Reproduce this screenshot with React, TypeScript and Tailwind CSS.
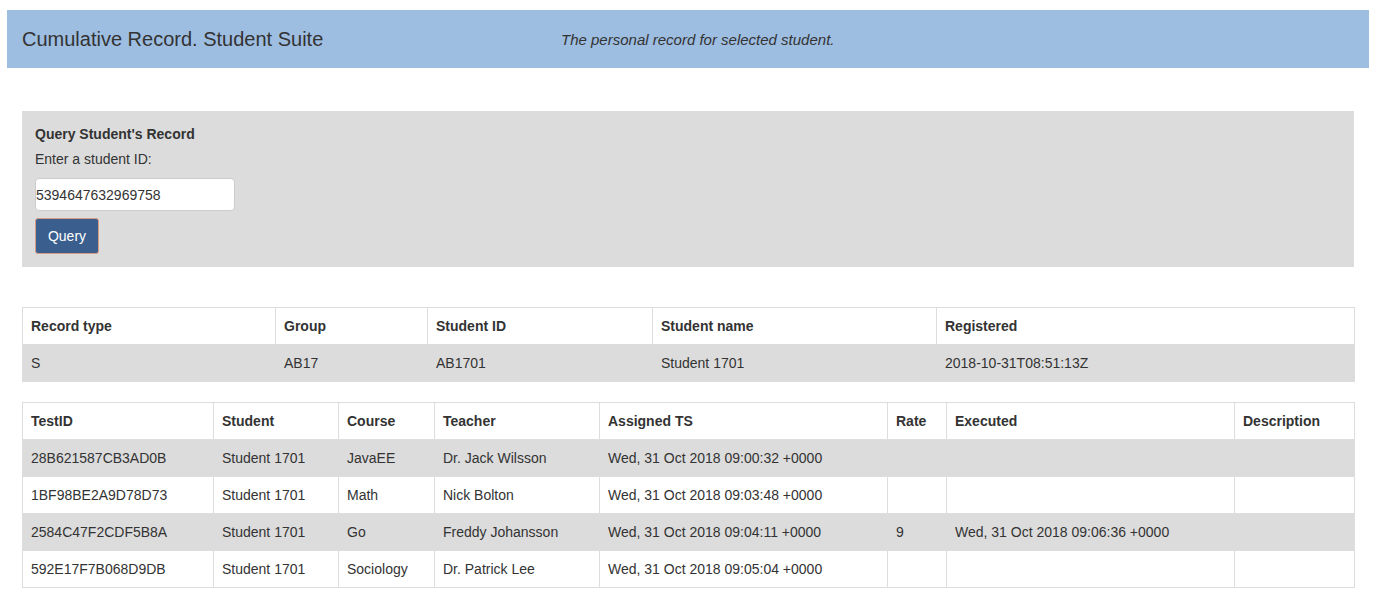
import React from "react";

const t1Cols = [253, 152, 225, 284, 418];
const t1Head = ["Record type", "Group", "Student ID", "Student name", "Registered"];
const t1Rows = [["S", "AB17", "AB1701", "Student 1701", "2018-10-31T08:51:13Z"]];

const t2Cols = [191, 125, 96, 165, 288, 59, 288, 120];
const t2Head = ["TestID", "Student", "Course", "Teacher", "Assigned TS", "Rate", "Executed", "Description"];
const t2Rows = [
  ["28B621587CB3AD0B", "Student 1701", "JavaEE", "Dr. Jack Wilsson", "Wed, 31 Oct 2018 09:00:32 +0000", "", "", ""],
  ["1BF98BE2A9D78D73", "Student 1701", "Math", "Nick Bolton", "Wed, 31 Oct 2018 09:03:48 +0000", "", "", ""],
  ["2584C47F2CDF5B8A", "Student 1701", "Go", "Freddy Johansson", "Wed, 31 Oct 2018 09:04:11 +0000", "9", "Wed, 31 Oct 2018 09:06:36 +0000", ""],
  ["592E17F7B068D9DB", "Student 1701", "Sociology", "Dr. Patrick Lee", "Wed, 31 Oct 2018 09:05:04 +0000", "", "", ""],
];

function DataTable({ cols, head, rows, className }: { cols: number[]; head: string[]; rows: string[][]; className?: string }) {
  return (
    <table className={"w-[1331px] table-fixed border-collapse border border-[#dddddd] " + (className ?? "")}>
      <colgroup>
        {cols.map((w, i) => (
          <col key={i} style={{ width: w }} />
        ))}
      </colgroup>
      <thead>
        <tr>
          {head.map((h, i) => (
            <th key={i} className="border border-[#dddddd] px-2 py-2 text-left align-bottom font-bold leading-5 whitespace-nowrap">
              {h}
            </th>
          ))}
        </tr>
      </thead>
      <tbody>
        {rows.map((r, ri) => (
          <tr key={ri} className={ri % 2 === 0 ? "bg-[#dcdcdc]" : "bg-white"}>
            {r.map((c, ci) => (
              <td key={ci} className="border border-[#dddddd] px-2 py-2 leading-5 h-[37px] whitespace-nowrap">
                {c}
              </td>
            ))}
          </tr>
        ))}
      </tbody>
    </table>
  );
}

export default function App() {
  return (
    <div className="min-h-[609px] bg-white text-[14px] leading-5 text-[#333333]" style={{ fontFamily: '"Liberation Sans", Arial, sans-serif' }}>
      <div className="pt-[10px] px-[7px]">
        <div className="flex h-[58px] items-center bg-[#9dbde1] pl-[15px]">
          <div className="w-[539px] text-[20px] leading-6">Cumulative Record. Student Suite</div>
          <div className="pt-[2px] text-[15px] italic">The personal record for selected student.</div>
        </div>
      </div>
      <div className="px-[22px] pt-[43px]">
        <div className="bg-[#dcdcdc] px-[13px] py-[13px]">
          <div className="font-bold leading-5">Query Student's Record</div>
          <div className="mt-[5px] leading-5">Enter a student ID:</div>
          <input
            readOnly
            value="5394647632969758"
            className="mt-[9px] block h-[33px] w-[200px] rounded-[4px] border border-[#cccccc] bg-white px-0 text-[14px] text-[#333333] outline-none"
            style={{ fontFamily: '"Liberation Sans", Arial, sans-serif' }}
          />
          <button className="mt-[7px] block h-[36px] w-[64px] rounded-[3px] border border-[#d89a80] bg-[#3a5f8e] text-[14px] text-white">
            Query
          </button>
        </div>
        <DataTable cols={t1Cols} head={t1Head} rows={t1Rows} className="mt-[40px]" />
        <DataTable cols={t2Cols} head={t2Head} rows={t2Rows} className="mt-[20px]" />
      </div>
    </div>
  );
}
